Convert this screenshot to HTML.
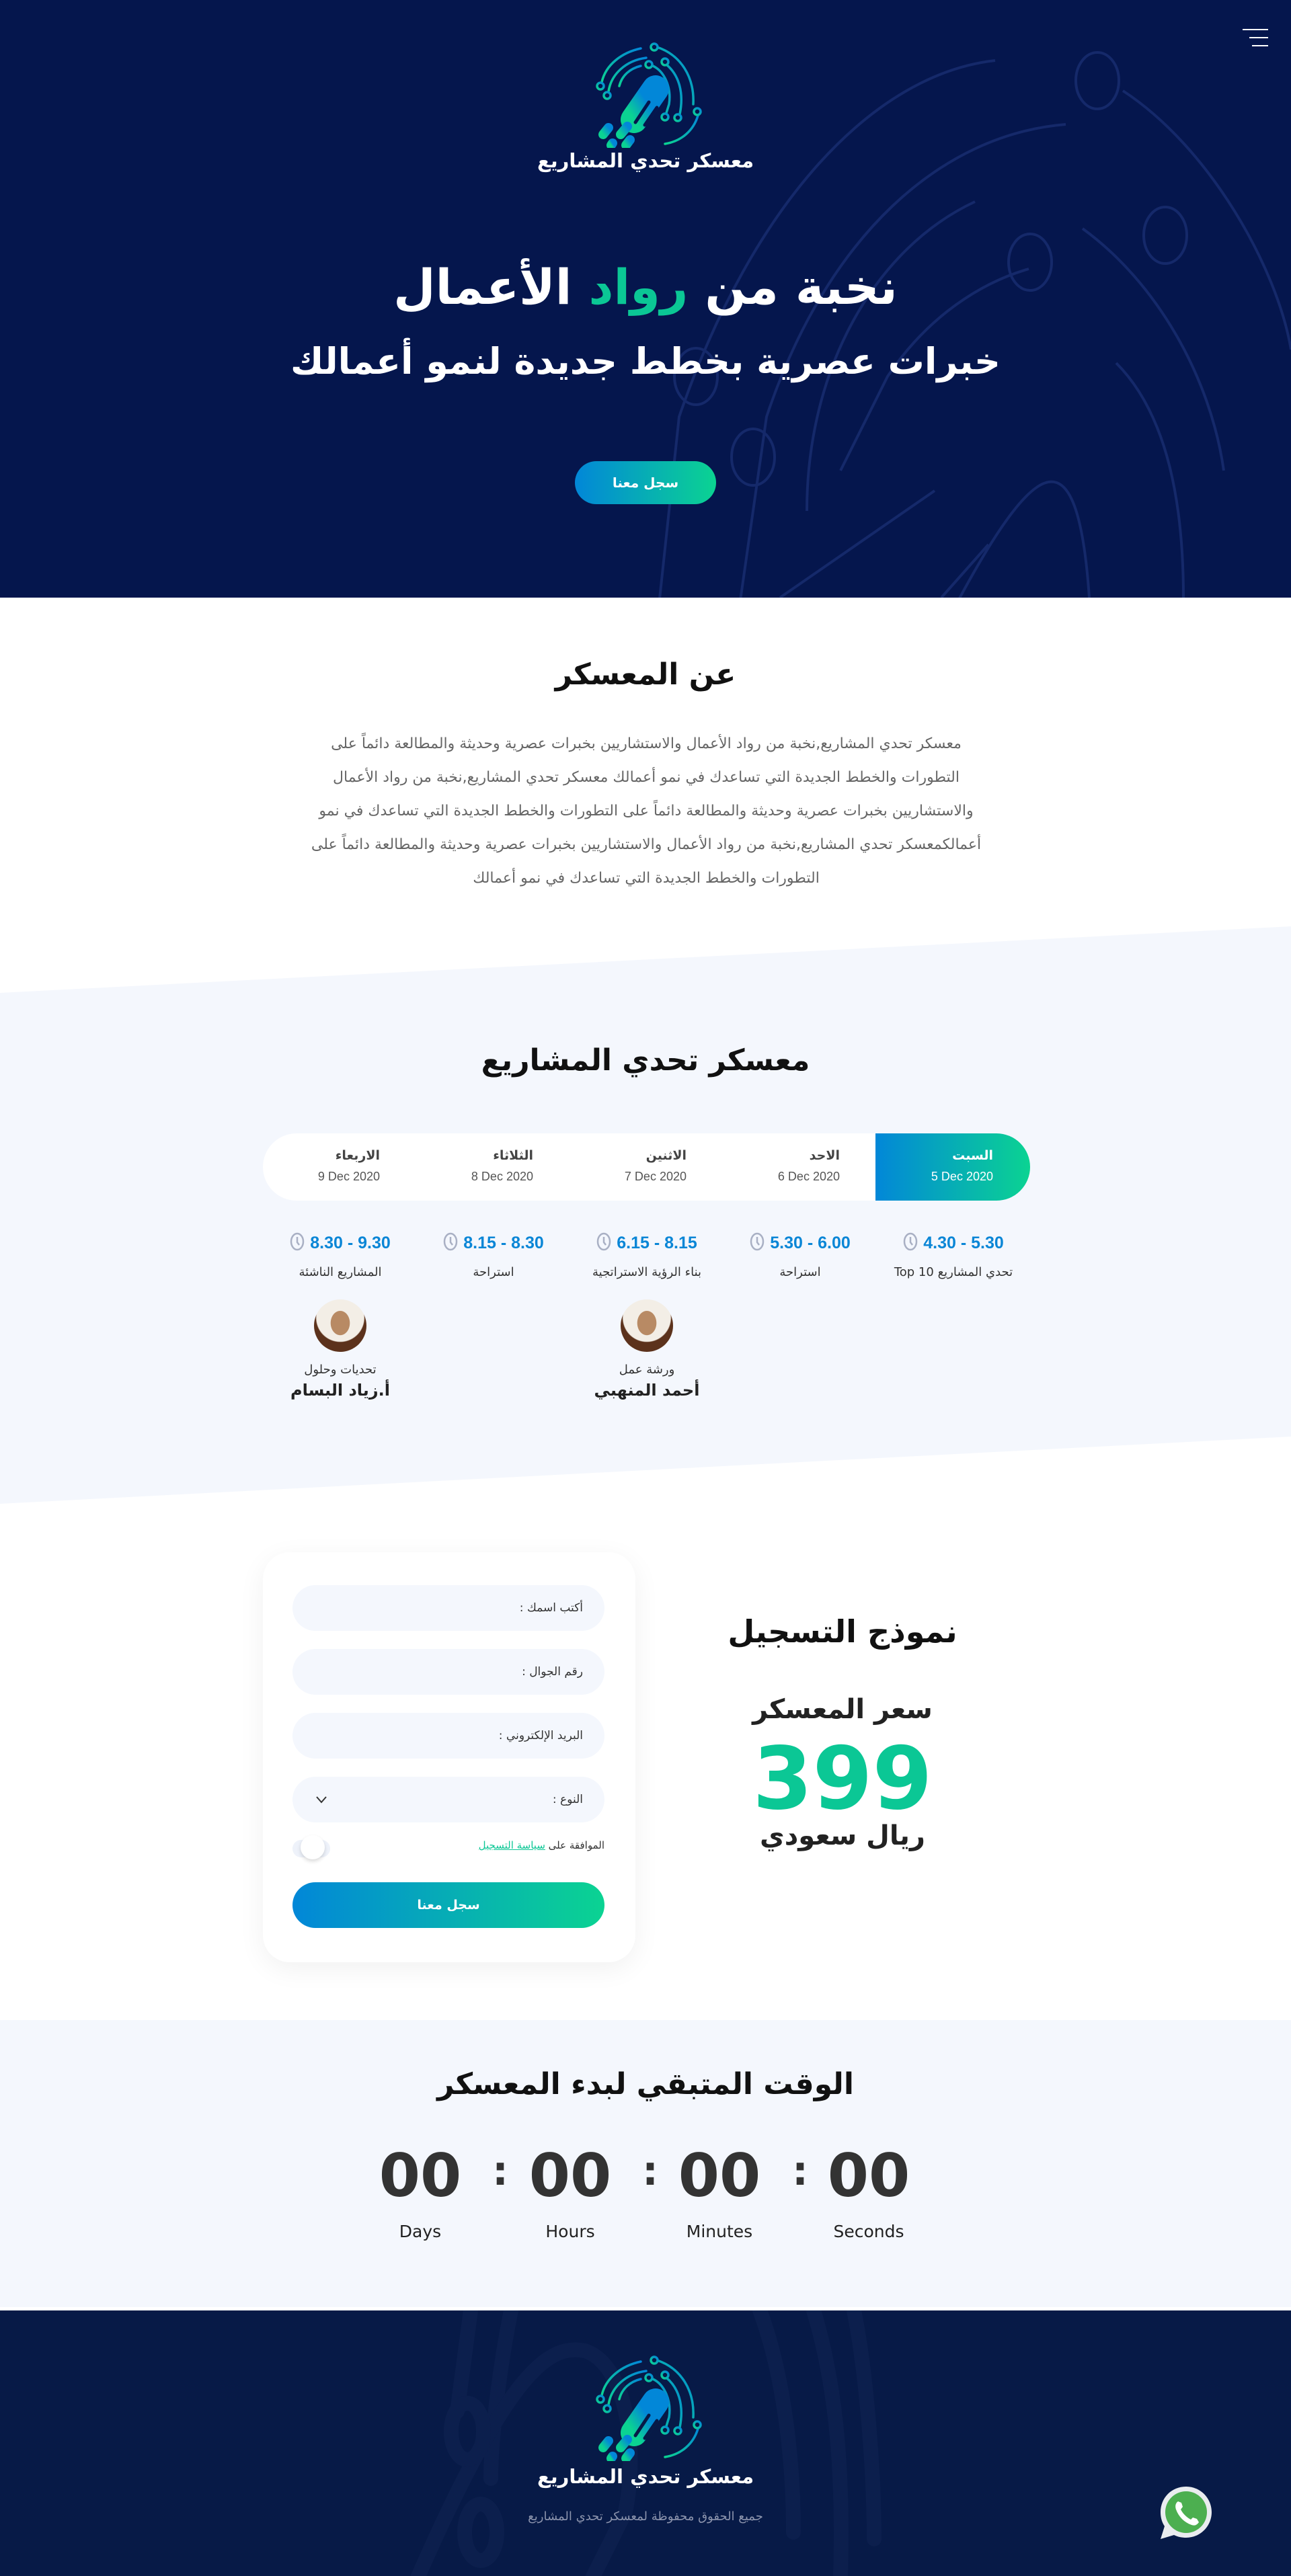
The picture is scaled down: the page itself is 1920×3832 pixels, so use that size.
<!DOCTYPE html>
<html lang="ar" dir="rtl">
<head>
<meta charset="utf-8">
<style>
*{margin:0;padding:0;box-sizing:border-box}
body{width:1920px;height:3832px;position:relative;overflow:hidden;background:#fff;font-family:"DejaVu Sans","Liberation Sans","Noto Sans CJK SC",sans-serif;color:#111}
.abs{position:absolute}
.c{text-align:center}
.hero{left:0;top:0;width:1920px;height:889px;background:#05164d;overflow:hidden}
.grad{background:linear-gradient(90deg,#0287d8,#0bd392)}
.h2{font-weight:bold;font-size:44px;color:#111;left:0;width:1920px;text-align:center}
.input{position:absolute;left:44px;width:464px;height:68px;border-radius:34px;background:#f4f7fd;font-size:17px;color:#333;padding-right:32px;line-height:68px;text-align:right}
.col{position:absolute;width:228px;text-align:center}
.time{color:#0a86d6;font-size:25px;font-weight:bold;font-family:"Liberation Sans",sans-serif;direction:ltr}
.time svg{vertical-align:-4px;margin-right:8px}
.ttl{font-size:18px;color:#333;margin-top:18px}
.av{width:78px;height:78px;border-radius:50%;margin:30px auto 0;background:radial-gradient(ellipse 30% 38% at 50% 45%,#b88a64 0 60%,transparent 62%),radial-gradient(circle at 50% 35%,#f3eee6 0 55%,#5c321c 57%)}
.role{font-size:18px;color:#333;margin-top:16px}
.name{font-size:24px;font-weight:bold;color:#222;margin-top:6px}
.num{position:absolute;width:160px;text-align:center;font-family:"DejaVu Sans",sans-serif;font-weight:bold;font-size:88px;color:#333;top:3182px;line-height:110px}
.lbl{position:absolute;width:160px;text-align:center;font-family:"DejaVu Sans",sans-serif;font-size:25px;color:#222;top:3305px}
.colon{position:absolute;font-size:60px;font-weight:bold;color:#333;top:3195px}
.tab{position:absolute;width:228px;top:22px;text-align:right;padding-right:55px}
.tab .d{font-size:19px;font-weight:bold}
.tab .t{font-size:18px;margin-top:10px;font-family:'Liberation Sans',sans-serif}
</style>
</head>
<body>
<svg width="0" height="0" style="position:absolute">
  <defs>
    <linearGradient id="lg" x1="0" y1="1" x2="1" y2="0"><stop offset="0" stop-color="#0bd392"/><stop offset="1" stop-color="#0287d8"/></linearGradient>
    <linearGradient id="lg2" x1="0" y1="1" x2="1" y2="0"><stop offset="0" stop-color="#0bd392"/><stop offset="0.6" stop-color="#0287d8"/></linearGradient>
  </defs>
</svg>

<!-- HERO -->
<div class="abs hero">
  <svg class="abs" style="left:0;top:0" width="1920" height="889" viewBox="0 0 1920 889" fill="none" stroke="#15296a" stroke-width="4">
    <path d="M1480 90 C1300 110 1120 300 1010 620 L980 900"/>
    <path d="M1585 185 C1400 200 1230 350 1140 620 L1100 900"/>
    <path d="M1450 300 C1300 370 1200 550 1200 760"/>
    <path d="M1670 135 C1800 220 1900 400 1920 520"/>
    <path d="M1610 340 C1720 420 1800 560 1820 700"/>
    <path d="M1660 540 C1740 620 1760 760 1760 889"/>
    <path d="M1530 400 C1460 420 1380 470 1320 560 L1250 700"/>
    <path d="M1370 1000 C1520 700 1600 600 1620 889"/>
    <path d="M1390 730 L1160 889"/>
    <path d="M1470 810 L1400 889"/>
    <ellipse cx="1632" cy="120" rx="32" ry="42"/>
    <ellipse cx="1733" cy="350" rx="32" ry="42"/>
    <ellipse cx="1532" cy="390" rx="32" ry="42"/>
    <ellipse cx="1120" cy="680" rx="32" ry="42"/>
    <ellipse cx="1035" cy="560" rx="32" ry="42"/>
  </svg>
  <div class="abs" style="left:1848px;top:43px;width:38px;height:2px;background:#fff"></div>
  <div class="abs" style="left:1858px;top:55px;width:28px;height:2px;background:#fff"></div>
  <div class="abs" style="left:1862px;top:67px;width:24px;height:2px;background:#fff"></div>
  <svg class="abs" style="left:873px;top:60px" width="180" height="160" viewBox="0 0 180 160" fill="none" stroke-linecap="round">
    <g stroke="url(#lg)" stroke-width="3.5">
      <path d="M22 62 C28 36 52 18 80 12"/>
      <path d="M32 76 C36 50 58 30 88 26"/>
      <path d="M48 68 C52 52 64 42 80 38"/>
      <path d="M104 10 C140 22 160 55 158 95"/>
      <path d="M118 36 C135 50 145 75 138 110"/>
      <path d="M98 38 C115 46 126 70 122 95 L118 108"/>
      <path d="M165 112 C158 135 140 150 116 154"/>
      <circle cx="100" cy="10" r="5" fill="#05164d"/>
      <circle cx="116" cy="32" r="5" fill="#05164d"/>
      <circle cx="92" cy="36" r="5" fill="#05164d"/>
      <circle cx="20" cy="68" r="5" fill="#05164d"/>
      <circle cx="30" cy="82" r="5" fill="#05164d"/>
      <circle cx="164" cy="106" r="5" fill="#05164d"/>
      <circle cx="135" cy="115" r="5" fill="#05164d"/>
      <circle cx="116" cy="114" r="5" fill="#05164d"/>
    </g>
    <g stroke="url(#lg2)" stroke-width="40">
      <path d="M102 72 L70 118"/>
    </g>
    <g stroke="#05164d" stroke-width="5">
      <path d="M92 92 L72 122"/>
      <path d="M104 100 L86 126"/>
    </g>
    <g stroke="url(#lg)" stroke-width="14">
      <path d="M24 140 L32 130"/>
      <path d="M36 156 L38 153"/>
      <path d="M50 140 L60 128"/>
      <path d="M58 156 L64 148"/>
    </g>
  </svg>
  <div class="abs c" style="left:0;width:1920px;top:222px;font-size:29px;font-weight:bold;color:#fff">معسكر تحدي المشاريع</div>
  <div class="abs c" style="left:0;width:1920px;top:385px;font-size:72px;font-weight:bold;color:#fff">نخبة من <span style="color:#0bc795">رواد</span> الأعمال</div>
  <div class="abs c" style="left:0;width:1920px;top:506px;font-size:54px;font-weight:bold;color:#fff">خبرات عصرية بخطط جديدة لنمو أعمالك</div>
  <div class="abs grad c" style="left:855px;top:686px;width:210px;height:64px;border-radius:32px;color:#fff;font-size:20px;font-weight:bold;line-height:64px">سجل معنا</div>
</div>

<!-- ABOUT -->
<div class="abs h2" style="top:978px">عن المعسكر</div>
<div class="abs" style="left:460px;width:1002px;top:1082px;font-size:22px;line-height:50px;color:#666;text-align:center">معسكر تحدي المشاريع,نخبة من رواد الأعمال والاستشاريين بخبرات عصرية وحديثة والمطالعة دائماً على التطورات والخطط الجديدة التي تساعدك في نمو أعمالك معسكر تحدي المشاريع,نخبة من رواد الأعمال والاستشاريين بخبرات عصرية وحديثة والمطالعة دائماً على التطورات والخطط الجديدة التي تساعدك في نمو أعمالكمعسكر تحدي المشاريع,نخبة من رواد الأعمال والاستشاريين بخبرات عصرية وحديثة والمطالعة دائماً على التطورات والخطط الجديدة التي تساعدك في نمو أعمالك</div>

<!-- SCHEDULE -->
<div class="abs" style="left:0;top:1370px;width:1920px;height:870px;background:#f4f7fd;clip-path:polygon(0 107px,1920px 8px,1920px 767px,0 867px)"></div>
<div class="abs h2" style="top:1552px">معسكر تحدي المشاريع</div>
<div class="abs" style="left:391px;top:1686px;width:1141px;height:100px;border-radius:50px;background:#fff;overflow:hidden">
  <div class="abs grad" style="right:0;top:0;width:230px;height:100px"></div>
</div>
<div class="abs" style="left:391px;top:1686px;width:1141px;height:100px">
  <div class="tab" style="right:0;color:#fff"><div class="d">السبت</div><div class="t"><bdi dir="ltr">5 Dec 2020</bdi></div></div>
  <div class="tab" style="right:228px;color:#444"><div class="d">الاحد</div><div class="t" style="color:#555"><bdi dir="ltr">6 Dec 2020</bdi></div></div>
  <div class="tab" style="right:456px;color:#444"><div class="d">الاثنين</div><div class="t" style="color:#555"><bdi dir="ltr">7 Dec 2020</bdi></div></div>
  <div class="tab" style="right:684px;color:#444"><div class="d">الثلاثاء</div><div class="t" style="color:#555"><bdi dir="ltr">8 Dec 2020</bdi></div></div>
  <div class="tab" style="right:912px;color:#444"><div class="d">الاربعاء</div><div class="t" style="color:#555"><bdi dir="ltr">9 Dec 2020</bdi></div></div>
</div>

<div class="abs" style="left:391px;top:1833px;width:1141px;height:260px">
  <div class="col" style="right:0"><div class="time"><svg width="22" height="28" viewBox="0 0 22 28" fill="none" stroke="#a9b0c4" stroke-width="2.5"><ellipse cx="11" cy="14" rx="9" ry="12"/><path d="M11 7v8l3 4"/></svg>4.30 - 5.30</div><div class="ttl">تحدي المشاريع Top 10</div></div>
  <div class="col" style="right:228px"><div class="time"><svg width="22" height="28" viewBox="0 0 22 28" fill="none" stroke="#a9b0c4" stroke-width="2.5"><ellipse cx="11" cy="14" rx="9" ry="12"/><path d="M11 7v8l3 4"/></svg>5.30 - 6.00</div><div class="ttl">استراحة</div></div>
  <div class="col" style="right:456px"><div class="time"><svg width="22" height="28" viewBox="0 0 22 28" fill="none" stroke="#a9b0c4" stroke-width="2.5"><ellipse cx="11" cy="14" rx="9" ry="12"/><path d="M11 7v8l3 4"/></svg>6.15 - 8.15</div><div class="ttl">بناء الرؤية الاستراتجية</div><div class="av"></div><div class="role">ورشة عمل</div><div class="name">أحمد المنهبي</div></div>
  <div class="col" style="right:684px"><div class="time"><svg width="22" height="28" viewBox="0 0 22 28" fill="none" stroke="#a9b0c4" stroke-width="2.5"><ellipse cx="11" cy="14" rx="9" ry="12"/><path d="M11 7v8l3 4"/></svg>8.15 - 8.30</div><div class="ttl">استراحة</div></div>
  <div class="col" style="right:912px"><div class="time"><svg width="22" height="28" viewBox="0 0 22 28" fill="none" stroke="#a9b0c4" stroke-width="2.5"><ellipse cx="11" cy="14" rx="9" ry="12"/><path d="M11 7v8l3 4"/></svg>8.30 - 9.30</div><div class="ttl">المشاريع الناشئة</div><div class="av"></div><div class="role">تحديات وحلول</div><div class="name">أ.زياد البسام</div></div>
</div>

<!-- FORM -->
<div class="abs" style="left:391px;top:2309px;width:554px;height:610px;border-radius:40px;background:#fff;box-shadow:0 10px 40px rgba(0,0,0,0.06)">
  <div class="input" style="top:49px">أكتب اسمك :</div>
  <div class="input" style="top:144px">رقم الجوال :</div>
  <div class="input" style="top:239px">البريد الإلكتروني :</div>
  <div class="input" style="top:334px">النوع :<svg style="position:absolute;left:34px;top:28px" width="18" height="12" viewBox="0 0 18 12" fill="none" stroke="#333" stroke-width="2"><path d="M2 2l7 8 7-8"/></svg></div>
  <div class="abs" style="left:44px;top:428px;width:56px;height:26px;border-radius:13px;background:#eef2fa"></div>
  <div class="abs" style="left:56px;top:421px;width:36px;height:36px;border-radius:50%;background:#fff;box-shadow:0 3px 6px rgba(0,0,0,0.15)"></div>
  <div class="abs" style="right:46px;top:427px;font-size:15px;color:#333">الموافقة على <span style="color:#0bc795;text-decoration:underline">سياسة التسجيل</span></div>
  <div class="abs grad c" style="left:44px;top:491px;width:464px;height:68px;border-radius:34px;color:#fff;font-size:19px;font-weight:bold;line-height:68px">سجل معنا</div>
</div>
<div class="abs c" style="left:1053px;width:400px;top:2400px;font-size:46px;font-weight:bold;color:#111">نموذج التسجيل</div>
<div class="abs c" style="left:1053px;width:400px;top:2520px;font-size:40px;font-weight:bold;color:#222">سعر المعسكر</div>
<div class="abs c" style="left:1053px;width:400px;top:2572px;font-size:128px;font-weight:bold;color:#0bc795;font-family:'DejaVu Sans',sans-serif;line-height:150px">399</div>
<div class="abs c" style="left:1053px;width:400px;top:2708px;font-size:40px;font-weight:bold;color:#222">ريال سعودي</div>

<!-- COUNTDOWN -->
<div class="abs" style="left:0;top:3005px;width:1920px;height:427px;background:#f4f7fd"></div>
<div class="abs h2" style="top:3075px">الوقت المتبقي لبدء المعسكر</div>
<div class="num" style="left:545px">00</div>
<div class="num" style="left:768px">00</div>
<div class="num" style="left:990px">00</div>
<div class="num" style="left:1212px">00</div>
<div class="colon" style="left:732px">:</div>
<div class="colon" style="left:955px">:</div>
<div class="colon" style="left:1178px">:</div>
<div class="lbl" style="left:545px">Days</div>
<div class="lbl" style="left:768px">Hours</div>
<div class="lbl" style="left:990px">Minutes</div>
<div class="lbl" style="left:1212px">Seconds</div>

<!-- FOOTER -->
<div class="abs" style="left:0;top:3437px;width:1920px;height:395px;background:#071a47;overflow:hidden">
  <svg class="abs" style="left:0;top:0" width="1920" height="395" fill="none" stroke="#0c1f4d" stroke-width="22" stroke-linecap="round">
    <path d="M700 0 L680 150"/>
    <path d="M760 0 C740 100 730 200 730 250"/>
    <path d="M620 400 C760 80 820 50 870 60 C930 80 950 200 930 300 L880 400"/>
    <path d="M1130 0 C1160 80 1180 200 1180 330"/>
    <path d="M1210 0 C1240 100 1255 220 1250 395"/>
    <path d="M1270 0 C1290 100 1300 250 1300 340"/>
    <ellipse cx="695" cy="180" rx="24" ry="42"/>
    <ellipse cx="715" cy="330" rx="24" ry="42"/>
    <ellipse cx="1280" cy="470" rx="24" ry="42"/>
  </svg>
  <svg class="abs" style="left:873px;top:64px" width="180" height="160" viewBox="0 0 180 160" fill="none" stroke-linecap="round">
    <g stroke="url(#lg)" stroke-width="3.5">
      <path d="M22 62 C28 36 52 18 80 12"/>
      <path d="M32 76 C36 50 58 30 88 26"/>
      <path d="M48 68 C52 52 64 42 80 38"/>
      <path d="M104 10 C140 22 160 55 158 95"/>
      <path d="M118 36 C135 50 145 75 138 110"/>
      <path d="M98 38 C115 46 126 70 122 95 L118 108"/>
      <path d="M165 112 C158 135 140 150 116 154"/>
      <circle cx="100" cy="10" r="5" fill="#071a47"/>
      <circle cx="116" cy="32" r="5" fill="#071a47"/>
      <circle cx="92" cy="36" r="5" fill="#071a47"/>
      <circle cx="20" cy="68" r="5" fill="#071a47"/>
      <circle cx="30" cy="82" r="5" fill="#071a47"/>
      <circle cx="164" cy="106" r="5" fill="#071a47"/>
      <circle cx="135" cy="115" r="5" fill="#071a47"/>
      <circle cx="116" cy="114" r="5" fill="#071a47"/>
    </g>
    <g stroke="url(#lg2)" stroke-width="40"><path d="M102 72 L70 118"/></g>
    <g stroke="#071a47" stroke-width="5"><path d="M92 92 L72 122"/><path d="M104 100 L86 126"/></g>
    <g stroke="url(#lg)" stroke-width="14">
      <path d="M24 140 L32 130"/><path d="M36 156 L38 153"/><path d="M50 140 L60 128"/><path d="M58 156 L64 148"/>
    </g>
  </svg>
  <div class="abs c" style="left:0;width:1920px;top:230px;font-size:29px;font-weight:bold;color:#fff">معسكر تحدي المشاريع</div>
  <div class="abs c" style="left:0;width:1920px;top:296px;font-size:18px;color:#8c94ad">جميع الحقوق محفوظة لمعسكر تحدي المشاريع</div>
  <svg class="abs" style="left:1722px;top:258px" width="84" height="86" viewBox="0 0 84 86">
    <path d="M42 4 C20 4 4 21 4 42 C4 50 6 57 10 63 L4 82 L24 76 C30 79 36 80 42 80 C63 80 80 63 80 42 C80 21 63 4 42 4Z" fill="#e9ecef"/>
    <circle cx="42" cy="42" r="31" fill="#4caf50"/>
    <path d="M30 26 C27 28 25 32 27 38 C31 49 39 57 50 61 C56 63 59 60 61 57 L58 52 L52 50 L49 53 C43 50 37 44 34 38 L37 34 L35 28 Z" fill="#fff"/>
  </svg>
</div>

</body>
</html>
